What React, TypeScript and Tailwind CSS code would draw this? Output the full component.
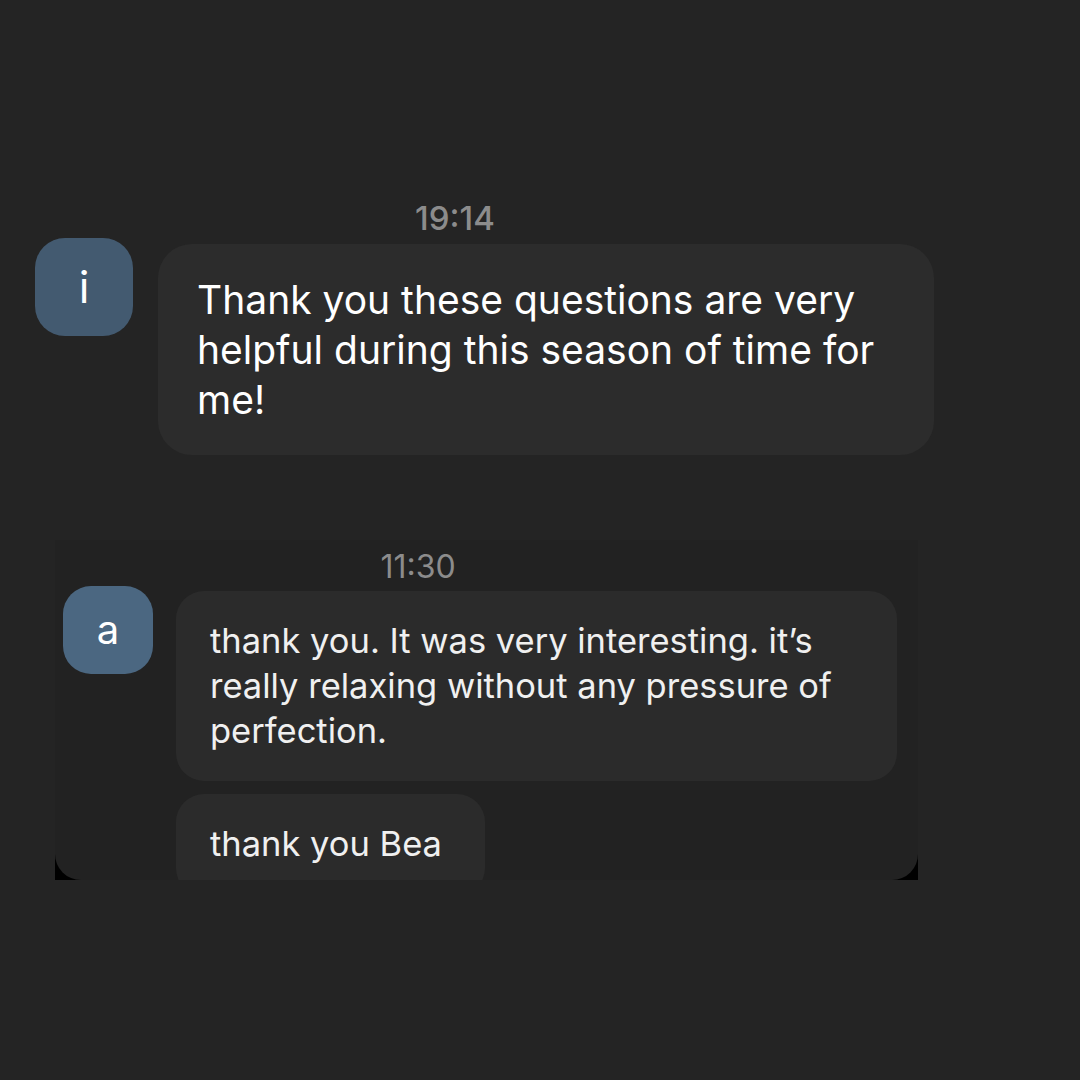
import React from 'react';

const font = { fontFamily: 'Inter, "Noto Sans", sans-serif' };

export default function App() {
    return (
        <div className="w-[1080px] h-[1080px] bg-[#242424] overflow-hidden" style={font}>
            {/* first conversation */}
            <div className="pt-[198px] pl-[35px]">
                <div className="w-[840px] text-center text-[33px] leading-[40px] text-[#8c8c8c] font-medium">19:14</div>
                <div className="flex items-start">
                    <div className="w-[98px] h-[98px] rounded-[30px] bg-[#435a70] flex items-center justify-center text-white text-[44px]">
                        i
                    </div>
                    <div className="ml-[25px] mt-[6px] w-[776px] h-[211px] rounded-[34px] bg-[#2c2c2c] pl-[39px] pr-[30px] pt-[31px] text-[39px] leading-[50px] text-white">
                        Thank you these questions are very helpful during this season of time for me!
                    </div>
                </div>
            </div>

            {/* second conversation, cropped screenshot */}
            <div className="ml-[55px] mt-[85px] w-[863px] h-[340px] bg-black">
                <div className="w-full h-full bg-[#222222] rounded-b-[26px] overflow-hidden pt-[8px]">
                    <div className="w-[726px] text-center text-[32px] leading-[38px] text-[#8c8c8c]">11:30</div>
                    <div className="flex items-start pl-[8px]">
                        <div className="w-[90px] h-[88px] rounded-[28px] bg-[#4b6781] flex items-center justify-center text-white text-[40px]">
                            a
                        </div>
                        <div className="ml-[23px] flex flex-col items-start gap-[13px] mt-[5px]">
                            <div className="w-[721px] h-[190px] rounded-[28px] bg-[#2b2b2b] pl-[34px] pr-[20px] pt-[27px] text-[34.5px] leading-[45px] text-[#f0f0f0]">
                                thank you. It was very interesting. it’s really relaxing without any pressure of perfection.
                            </div>
                            <div className="w-[309px] rounded-[28px] bg-[#2b2b2b] pl-[34px] pt-[27px] pb-[30px] text-[34.5px] leading-[45px] text-[#f0f0f0]">
                                thank you Bea
                            </div>
                        </div>
                    </div>
                </div>
            </div>
        </div>
    );
}
